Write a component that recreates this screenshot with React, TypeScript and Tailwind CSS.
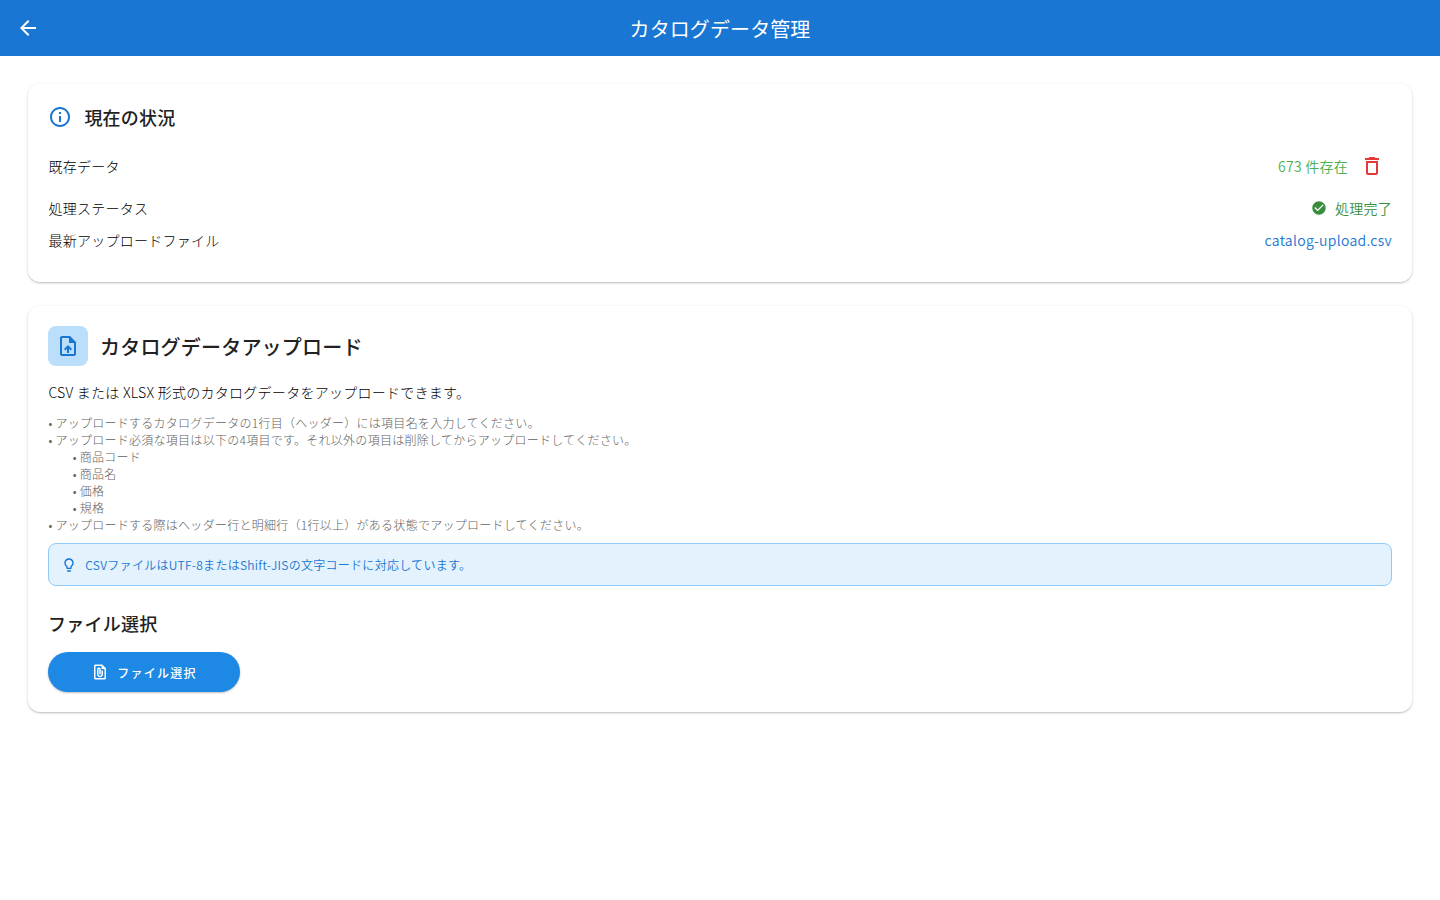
import type { ReactNode } from "react";
import {
  MdArrowBack,
  MdCheckCircle,
  MdDeleteOutline,
  MdFilePresent,
  MdInfoOutline,
  MdLightbulbOutline,
  MdOutlineUploadFile,
} from "react-icons/md";

function Card({ className, children }: { className: string; children: ReactNode }) {
  return (
    <section
      className={`rounded-xl bg-white px-5 shadow-[0_1px_3px_rgba(0,0,0,0.18),0_1px_1px_rgba(0,0,0,0.10)] ${className}`}
    >
      {children}
    </section>
  );
}

function StatusRow({ label, height, children }: { label: string; height: string; children: ReactNode }) {
  return (
    <div className={`flex items-center justify-between text-sm font-[350] tracking-[0.25px] ${height}`}>
      <span className="pl-[0.4px] font-light text-black">{label}</span>
      {children}
    </div>
  );
}

const notes = [
  { text: "• アップロードするカタログデータの1行目（ヘッダー）には項目名を入力してください。", nested: false },
  { text: "• アップロード必須な項目は以下の4項目です。それ以外の項目は削除してからアップロードしてください。", nested: false },
  { text: "• 商品コード", nested: true },
  { text: "• 商品名", nested: true },
  { text: "• 価格", nested: true },
  { text: "• 規格", nested: true },
  { text: "• アップロードする際はヘッダー行と明細行（1行以上）がある状態でアップロードしてください。", nested: false },
];

export default function App() {
  return (
    <div className="min-h-screen bg-white font-['Noto_Sans_CJK_JP','Noto_Sans_JP',sans-serif] text-[#212121] antialiased">
      <header className="grid h-14 grid-cols-[56px_1fr_56px] items-center bg-[#1976d2] text-white">
        <button className="flex h-14 items-center justify-center" aria-label="戻る">
          <MdArrowBack size={24} />
        </button>
        <h1 className="pt-0.5 text-center text-xl font-normal tracking-[0.1px]">カタログデータ管理</h1>
      </header>

      <main className="flex flex-col gap-6 px-7 py-7">
        <Card className="h-[198px] pt-5">
          <div className="flex h-[26px] items-center gap-3">
            <MdInfoOutline size={24} className="text-[#1976d2]" />
            <h2 className="pl-[0.4px] text-lg leading-6 font-medium tracking-[0.2px]">現在の状況</h2>
          </div>
          <div className="pt-2.5">
            <StatusRow label="既存データ" height="h-[52px]">
              <div className="flex items-center">
                <span className="text-[#4caf50]">673 件存在</span>
                <button className="ml-1 flex size-10 items-center justify-center text-[#e53935]" aria-label="削除">
                  <MdDeleteOutline size={24} />
                </button>
              </div>
            </StatusRow>
            <StatusRow label="処理ステータス" height="h-8">
              <span className="flex items-center gap-2 text-[#388e3c]">
                <MdCheckCircle size={16} />
                処理完了
              </span>
            </StatusRow>
            <StatusRow label="最新アップロードファイル" height="h-8">
              <span className="tracking-[0.3px] text-[#1976d2]">catalog-upload.csv</span>
            </StatusRow>
          </div>
        </Card>

        <Card className="h-[406px] pt-5">
          <div className="flex items-center gap-3">
            <div className="flex size-10 items-center justify-center rounded-lg bg-[#bbdefb] text-[#1976d2]">
              <MdOutlineUploadFile size={24} />
            </div>
            <h2 className="pt-0.5 text-xl font-medium tracking-[0.2px]">カタログデータアップロード</h2>
          </div>
          <p className="mt-4 pl-[0.4px] text-sm leading-5 font-light tracking-[0.27px] text-black">
            CSV または XLSX 形式のカタログデータをアップロードできます。
          </p>
          <ul className="mt-3 text-xs leading-[17px] font-light tracking-[0.27px] text-[#616161]">
            {notes.map((note) => (
              <li key={note.text} className={note.nested ? "pl-[24.8px]" : "pl-[0.4px]"}>
                {note.text}
              </li>
            ))}
          </ul>
          <div className="mt-2.5 flex h-[43px] items-center gap-2 rounded-lg border border-[#90caf9] bg-[#e3f2fd] px-3 text-[#1976d2]">
            <MdLightbulbOutline size={16} />
            <p className="pl-[0.3px] text-xs font-[350] tracking-[0.28px]">
              CSVファイルはUTF-8またはShift-JISの文字コードに対応しています。
            </p>
          </div>
          <h3 className="mt-6 text-lg leading-[26px] font-medium tracking-[0.25px]">ファイル選択</h3>
          <button className="mt-4 flex h-10 w-48 items-center justify-center gap-2 rounded-full bg-[#1e88e5] text-xs font-medium tracking-[1.25px] text-white shadow-[0_1px_2px_rgba(0,0,0,0.25)]">
            <MdFilePresent size={18} />
            <span className="pt-0.5">ファイル選択</span>
          </button>
        </Card>
      </main>
    </div>
  );
}
